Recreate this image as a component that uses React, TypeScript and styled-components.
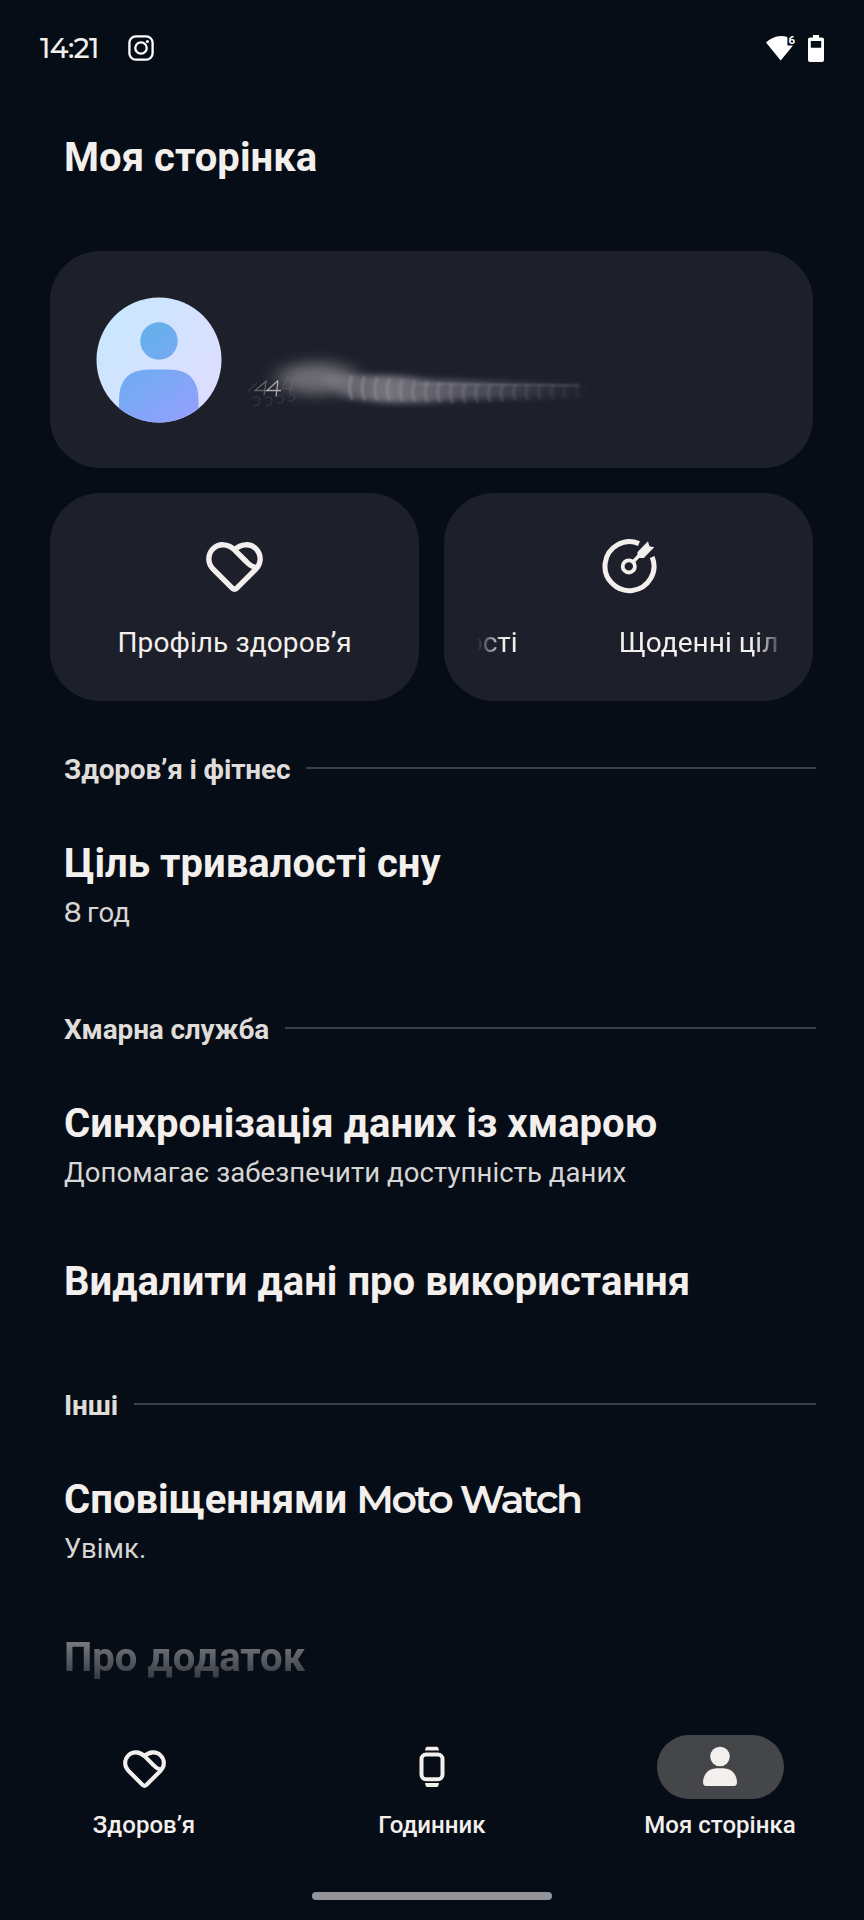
import React from "react";
import styled, { createGlobalStyle } from "styled-components";

const GlobalStyle = createGlobalStyle`
  * { box-sizing: border-box; }
  html, body { margin: 0; background: #060d17; }
  body { font-family: Roboto, "Noto Sans", sans-serif; color: #f3efed; }
`;

const Screen = styled.main`
  width: 864px;
  height: 1920px;
  display: flex;
  flex-direction: column;
  background: #060d17;
  overflow: hidden;
`;

const StatusBar = styled.header`
  height: 96px;
  flex: none;
  display: flex;
  align-items: center;
  justify-content: space-between;
  padding: 0 40px;
`;

const StatusGroup = styled.div<{ $gap: number }>`
  display: flex;
  align-items: center;
  gap: ${(p) => p.$gap}px;
  svg { display: block; }
`;

const Geo = styled.span<{ $size: number; $weight: number; $track: number }>`
  font-family: Montserrat, Lato, sans-serif;
  font-size: ${(p) => p.$size}px;
  font-weight: ${(p) => p.$weight};
  letter-spacing: ${(p) => p.$track}px;
  line-height: 1;
  white-space: nowrap;
`;

const PageTitle = styled.h1`
  margin: 0;
  height: 155px;
  flex: none;
  padding: 39px 0 0 64px;
  font-size: 40px;
  font-weight: 700;
  line-height: 46px;
  letter-spacing: 0.04px;
`;

const Cards = styled.section`
  display: flex;
  flex-direction: column;
  gap: 25px;
  flex: none;
  padding: 0 50.6px 0 50.2px;
`;

const ProfileCard = styled.article`
  height: 217px;
  display: flex;
  align-items: center;
  gap: 17.5px;
  padding-left: 45.8px;
  border-radius: 50px;
  background: #1d1f2a;
  svg { display: block; flex: none; }
`;

const QuickRow = styled.div`
  display: grid;
  grid-template-columns: 369px 369px;
  justify-content: space-between;
`;

const QuickCard = styled.article`
  height: 208px;
  display: flex;
  flex-direction: column;
  align-items: center;
  padding-top: 42px;
  border-radius: 50px;
  background: #1d1f2a;
  svg { display: block; }
`;

const QuickLabel = styled.div`
  margin-top: 26px;
  font-size: 28px;
  line-height: 34px;
  letter-spacing: 0.1px;
  white-space: nowrap;
`;

const Marquee = styled(QuickLabel)`
  width: 304px;
  display: flex;
  justify-content: flex-end;
  gap: 101px;
  padding-right: 2.5px;
  letter-spacing: 0.02px;
  overflow: hidden;
  mask-image: linear-gradient(90deg, transparent 0, #000 26px, #000 278px, transparent 308px);
`;

const List = styled.div`
  flex: 1;
  min-height: 0;
  overflow: hidden;
  padding-left: 64px;
`;

const SectionHeader = styled.h2`
  display: flex;
  align-items: center;
  gap: 16px;
  height: 46px;
  margin: 0;
  padding-right: 48px;
  color: #dfdcd9;
  font-size: 28px;
  font-weight: 700;
  line-height: 34px;
  letter-spacing: -0.16px;
  white-space: nowrap;
  &::after {
    content: "";
    flex: 1;
    height: 2px;
    margin-top: -4px;
    background: #3c4046;
  }
`;

const Section = styled.section<{ $top: number }>`
  padding-top: ${(p) => p.$top}px;
`;

const Item = styled.div<{ $fade?: boolean }>`
  padding: 47px 0 21.5px;
  ${(p) => p.$fade && "mask-image: linear-gradient(180deg, rgba(0,0,0,.5) 52px, rgba(0,0,0,.2) 92px);"}
`;

const ItemTitle = styled.h3`
  display: flex;
  align-items: baseline;
  gap: 9px;
  margin: 0;
  height: 47px;
  font-size: 40px;
  font-weight: 700;
  line-height: 47px;
  letter-spacing: 0.03px;
  white-space: nowrap;
`;

const ItemNote = styled.p`
  margin: 0;
  padding-top: 8px;
  height: 42.5px;
  color: #d8d6d4;
  font-size: 27.5px;
  line-height: 36px;
  letter-spacing: 0.08px;
  white-space: nowrap;
`;

const BottomNav = styled.nav`
  height: 143px;
  flex: none;
  display: grid;
  grid-template-columns: repeat(3, 1fr);
`;

const NavItem = styled.div`
  display: flex;
  flex-direction: column;
  align-items: center;
  font-size: 24px;
  font-weight: 500;
  line-height: 30px;
  letter-spacing: 0.05px;
  gap: 10.5px;
`;

const NavPill = styled.div<{ $active?: boolean; $drop?: number }>`
  width: 127px;
  height: 64px;
  display: flex;
  align-items: center;
  justify-content: center;
  padding-top: ${(p) => p.$drop ?? 0}px;
  border-radius: 32px;
  background: ${(p) => (p.$active ? "#454649" : "transparent")};
`;

const HomeArea = styled.footer`
  height: 42px;
  flex: none;
  display: flex;
  justify-content: center;
  padding-top: 14px;
`;

const HomeHandle = styled.div`
  width: 240px;
  height: 8px;
  border-radius: 4px;
  background: #929499;
`;

const InstagramIcon = () => (
  <svg width="26" height="26" viewBox="0 0 26 26" fill="none" stroke="#fff" strokeWidth="2.3">
    <rect x="1.4" y="1.4" width="23.2" height="23.2" rx="6.4" />
    <circle cx="13" cy="13" r="5.7" />
    <circle cx="19.4" cy="6.6" r="1.5" fill="#fff" stroke="none" />
  </svg>
);

const WifiIcon = () => (
  <svg width="30" height="26" viewBox="0 0 30 26" overflow="visible">
    <path d="M0 7.6Q7 1 14.7 1Q18.500 1 21.400 2V10.400H27L14.700 25.600Z" fill="#fff" />
    <text x="22.400" y="9.300" fontSize="11.500" fontWeight="700" fontFamily="Roboto, sans-serif" fill="#fff">6</text>
  </svg>
);

const BatteryIcon = () => (
  <svg width="16" height="27" viewBox="0 0 16 27">
    <path fillRule="evenodd" fill="#fff" d="M5 0H11V2.6H14Q16 2.6 16 4.6V25Q16 27 14 27H2Q0 27 0 25V4.6Q0 2.6 2 2.6H5ZM2.8 6V12.8H13.2V6Z" />
  </svg>
);

const Avatar = () => (
  <svg width="126" height="126" viewBox="0 0 126 126">
    <defs>
      <linearGradient id="halo" x1="0" y1="0.15" x2="1" y2="0.85">
        <stop offset="0" stopColor="#c8e8ff" />
        <stop offset="1" stopColor="#dedcff" />
      </linearGradient>
      <linearGradient id="figure" gradientUnits="userSpaceOnUse" x1="30" y1="35" x2="98" y2="125">
        <stop offset="0" stopColor="#5fb1ea" />
        <stop offset="1" stopColor="#959fff" />
      </linearGradient>
      <clipPath id="disc"><circle cx="63" cy="63" r="62.5" /></clipPath>
    </defs>
    <circle cx="63" cy="63" r="62.5" fill="url(#halo)" />
    <circle cx="63" cy="44" r="18.7" fill="url(#figure)" />
    <path clipPath="url(#disc)" fill="url(#figure)" d="M23 126V103Q23 72.500 53 72.500H73Q102.500 72.500 102.500 103V126Z" />
  </svg>
);

const smearTicks = Array.from({ length: 19 }, (_, i) => i);

const SmearedName = () => (
  <svg width="370" height="130" viewBox="0 0 370 130">
    <defs>
      <filter id="wide" x="-60%" y="-100%" width="220%" height="300%"><feGaussianBlur stdDeviation="10 7" /></filter>
      <filter id="mid" x="-20%" y="-60%" width="140%" height="220%"><feGaussianBlur stdDeviation="6 3" /></filter>
      <filter id="fine" x="-10%" y="-30%" width="120%" height="160%"><feGaussianBlur stdDeviation="1.3" /></filter>
      <linearGradient id="trail" x1="0" x2="1">
        <stop offset="0" stopColor="#85848d" stopOpacity="0.35" />
        <stop offset="0.25" stopColor="#85848d" stopOpacity="0.85" />
        <stop offset="0.55" stopColor="#777781" stopOpacity="0.6" />
        <stop offset="1" stopColor="#666672" stopOpacity="0" />
      </linearGradient>
    </defs>
    <g transform="translate(0 35.500)">
      <ellipse cx="78" cy="48" rx="40" ry="16" fill="#7a797f" opacity="0.85" filter="url(#wide)" />
      <path d="M80 46Q150 42 190 49L350 54V66L220 69Q160 77 105 67Z" fill="url(#trail)" filter="url(#mid)" />
      <g filter="url(#fine)" stroke="#a5a3af" strokeWidth="3.200" fill="none">
        {smearTicks.map((i) => (
          <path
            key={i}
            d={`M${113 + i * 12.6} ${45 + Math.min(i, 9)}q-5 ${12 - i * 0.3} 0 ${24 - i * 0.6}`}
            opacity={0.4 - i * 0.018}
          />
        ))}
        <path d="M180 53.500L340 55" opacity="0.4" strokeWidth="1.600" />
      </g>
      <g fill="none" stroke="#c4c2c6" strokeWidth="1.300">
        <path d="M39 50L28 60H42M39 51L37 66" opacity="0.85" />
        <path d="M28 50L16 60H29M27 51L25 65" opacity="0.4" />
        <path d="M18 52L8 62M49 46L43 58H54M54 49L51 63" opacity="0.14" />
        <path d="M14 68q5-4 7 1q0 7-6 6M26 68q5-4 7 1q0 7-6 6M38 66q5-3 7 2q-2 7-7 4M50 65q5-3 6 2q-2 6-7 3" opacity="0.13" />
      </g>
    </g>
  </svg>
);

const HeartIcon = ({ size }: { size: number }) => (
  <svg width={size} height={size} viewBox="0 0 64 64" fill="none" stroke="#f3efed" strokeWidth="5.3" strokeLinejoin="round">
    <path d="M32 14.600C25.500 8.400 16.500 8 11 13.500C5.200 19.300 5.400 28 11 33.600L30 52.600Q32 54.200 34 52.600L53 33.600C58.600 28 58.800 19.300 53 13.500C47.500 8 38.500 8.400 32 14.600L43.500 26.100Q49.500 32.600 54.200 31.500" />
  </svg>
);

const GoalIcon = () => (
  <svg width="56" height="65" viewBox="0 -3 56 65" fill="none" stroke="#f3efed">
    <path d="M38 5.600A24.500 24.500 0 1 0 51.200 19" strokeWidth="5" />
    <circle cx="27.800" cy="28.400" r="6.100" strokeWidth="3.800" />
    <path d="M32 24L40 15.500" strokeWidth="3.400" />
    <path fill="#f3efed" stroke="none" d="M36.500 14L47 3.200L48.400 8.200L53.200 9.200L42.800 20H38.300L36.500 18.200Z" />
  </svg>
);

const WatchIcon = () => (
  <svg width="42" height="42" viewBox="0 0 42 42">
    <rect x="10.500" y="8.500" width="21" height="24.700" rx="4.500" fill="none" stroke="#f3efed" strokeWidth="4" />
    <path fill="#f3efed" d="M16 0.700H26Q27.400 0.700 28 4.500H14Q14.600 0.700 16 0.700ZM14 37H28Q27.400 41 26 41H16Q14.600 41 14 37Z" />
  </svg>
);

const PersonIcon = () => (
  <svg width="40" height="42" viewBox="0 0 40 42" fill="#f3efed">
    <circle cx="20" cy="10.500" r="9.800" />
    <path d="M3 36C3.500 26.500 10 22.300 17 22.300H23C30 22.300 36.500 26.500 37 36Q37 40 34 40H6Q3 40 3 36Z" />
  </svg>
);

export default function App() {
  return (
    <>
      <GlobalStyle />
      <Screen>
        <StatusBar>
          <StatusGroup $gap={29}>
            <Geo $size={28} $weight={500} $track={-0.7}>14:21</Geo>
            <InstagramIcon />
          </StatusGroup>
          <StatusGroup $gap={12}>
            <WifiIcon />
            <BatteryIcon />
          </StatusGroup>
        </StatusBar>
        <PageTitle>Моя сторінка</PageTitle>
        <Cards>
          <ProfileCard>
            <Avatar />
            <SmearedName />
          </ProfileCard>
          <QuickRow>
            <QuickCard>
              <HeartIcon size={65} />
              <QuickLabel>Профіль здоров’я</QuickLabel>
            </QuickCard>
            <QuickCard>
              <GoalIcon />
              <Marquee><span>ості</span><span>Щоденні ціл</span></Marquee>
            </QuickCard>
          </QuickRow>
        </Cards>
        <List>
          <Section $top={46}>
            <SectionHeader>Здоров’я і фітнес</SectionHeader>
            <Item>
              <ItemTitle>Ціль тривалості сну</ItemTitle>
              <ItemNote><Geo $size={27} $weight={500} $track={-1.2}>8</Geo> год</ItemNote>
            </Item>
          </Section>
          <Section $top={56}>
            <SectionHeader>Хмарна служба</SectionHeader>
            <Item>
              <ItemTitle>Синхронізація даних із хмарою</ItemTitle>
              <ItemNote>Допомагає забезпечити доступність даних</ItemNote>
            </Item>
            <Item>
              <ItemTitle>Видалити дані про використання</ItemTitle>
            </Item>
          </Section>
          <Section $top={56}>
            <SectionHeader>Інші</SectionHeader>
            <Item>
              <ItemTitle>
                <span>Сповіщеннями</span>
                <Geo $size={39.5} $weight={600} $track={-2.4}>Moto Watch</Geo>
              </ItemTitle>
              <ItemNote>Увімк.</ItemNote>
            </Item>
            <Item $fade>
              <ItemTitle>Про додаток</ItemTitle>
            </Item>
          </Section>
        </List>
        <BottomNav>
          <NavItem><NavPill $drop={4}><HeartIcon size={49} /></NavPill>Здоров’я</NavItem>
          <NavItem><NavPill><WatchIcon /></NavPill>Годинник</NavItem>
          <NavItem><NavPill $active><PersonIcon /></NavPill>Моя сторінка</NavItem>
        </BottomNav>
        <HomeArea><HomeHandle /></HomeArea>
      </Screen>
    </>
  );
}
